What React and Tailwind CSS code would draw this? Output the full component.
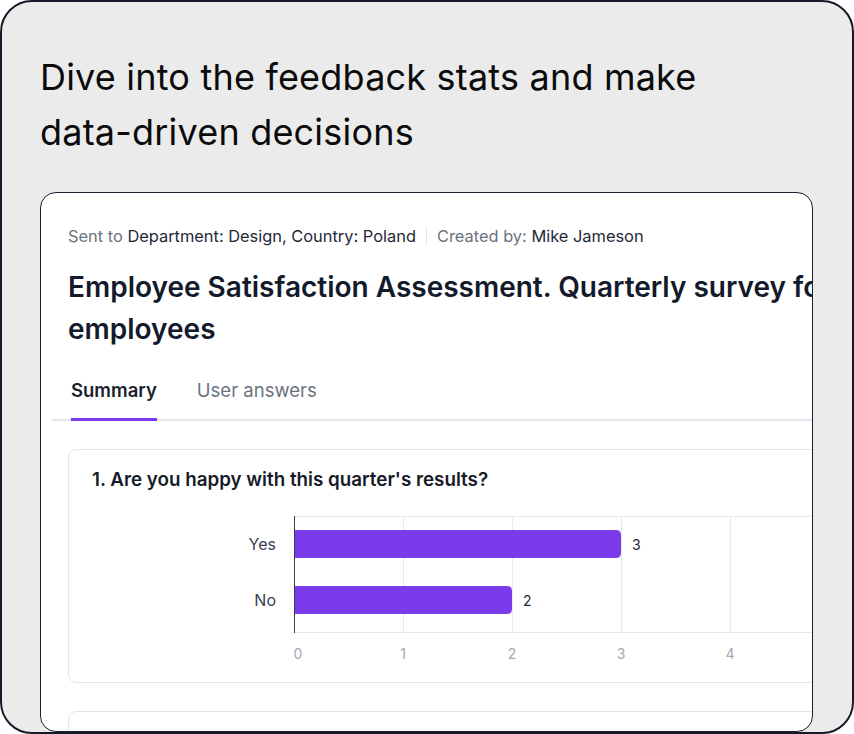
import React from "react";

const UNIT = 109;
const AXIS_X = 202;
const rows = [
  { label: "Yes", value: 3, y: 21 },
  { label: "No", value: 2, y: 77 },
];

function barPath(x, y, w, h, r) {
  return `M${x} ${y} H${x + w - r} Q${x + w} ${y} ${x + w} ${y + r} V${y + h - r} Q${x + w} ${y + h} ${x + w - r} ${y + h} H${x} Z`;
}

function BarChart() {
  const grid = [1, 2, 3, 4, 5, 6];
  const ticks = [0, 1, 2, 3, 4];
  return (
    <svg width="760" height="160" className="block" style={{ fontFamily: "Inter, sans-serif" }}>
      {grid.map((t) => (
        <line key={t} x1={AXIS_X + t * UNIT + 0.5} x2={AXIS_X + t * UNIT + 0.5} y1="7" y2="123" stroke="#e8eaee" strokeWidth="1" />
      ))}
      <line x1={AXIS_X} x2="760" y1="7.5" y2="7.5" stroke="#e8eaee" strokeWidth="1" />
      <line x1={AXIS_X} x2="760" y1="123.5" y2="123.5" stroke="#e3e6ea" strokeWidth="1" />
      {rows.map((r) => (
        <g key={r.label}>
          <path d={barPath(AXIS_X, r.y, r.value * UNIT, 28, 5)} fill="#7c3aed" />
          <text x="184" y={r.y + 14} textAnchor="end" dominantBaseline="central" fontSize="16" fill="#374151">
            {r.label}
          </text>
          <text x={AXIS_X + r.value * UNIT + 11} y={r.y + 14} dominantBaseline="central" fontSize="14" fill="#1f2937">
            {r.value}
          </text>
        </g>
      ))}
      <line x1={AXIS_X + 0.5} x2={AXIS_X + 0.5} y1="7" y2="124" stroke="#374151" strokeWidth="1" />
      {ticks.map((t) => (
        <text key={t} x={AXIS_X + t * UNIT + (t === 0 ? 4 : 0)} y="144" textAnchor="middle" dominantBaseline="central" fontSize="14" fill="#a3a8b3">
          {t}
        </text>
      ))}
    </svg>
  );
}

export default function App() {
  return (
    <div className="w-[854px] h-[734px] rounded-[32px] border-2 border-[#151a28] bg-[#ebebec] overflow-hidden flex flex-col font-['Inter',sans-serif]">
      <h1 className="pl-[38px] pt-[48px] text-[36px] leading-[55px] font-normal text-[#0b0b0c] tracking-[0.2px]">
        Dive into the feedback stats and make
        <br />
        data-driven decisions
      </h1>
      <div className="mt-[32px] ml-[38px] mr-[39px] flex-1 rounded-[16px] border border-[#1a2030] bg-white overflow-hidden">
        <div className="w-[900px] pl-[27px] pt-[31px]">
          <div className="flex items-center text-[16.4px] leading-[24px]">
            <span className="text-[#6b7280]">Sent to&nbsp;</span>
            <span className="text-[#1f2937]">Department: Design, Country: Poland</span>
            <span className="mx-[10px] h-[20px] w-px bg-[#e2e4e8]" />
            <span className="text-[#6b7280]">Created by:&nbsp;</span>
            <span className="text-[#1f2937]">Mike Jameson</span>
          </div>
          <h2 className="mt-[18px] w-[860px] text-[28px] leading-[42px] font-semibold text-[#131a2b]">
            Employee Satisfaction Assessment. Quarterly survey for employees
          </h2>
          <div className="mt-[26px] ml-[-16px] pl-[19px] flex gap-[40px] border-b-2 border-[#e3e6ec] text-[18.5px] leading-[28px]">
            <div className="pb-[14px] mb-[-2px] border-b-[3px] border-[#7c3aed] font-semibold text-[#1a1f2c]">Summary</div>
            <div className="pb-[14px] text-[#6b7280]">User answers</div>
          </div>
          <div className="mt-[28px] rounded-[8px] border border-[#e3e5e9] pl-[23px] pt-[16px] pb-[13px]">
            <div className="text-[18.8px] leading-[28px] font-semibold text-[#161b29]">
              1. Are you happy with this quarter's results?
            </div>
            <div className="mt-[15px]">
              <BarChart />
            </div>
          </div>
          <div className="mt-[28px] h-[60px] rounded-[8px] border border-[#e3e5e9]" />
        </div>
      </div>
    </div>
  );
}
